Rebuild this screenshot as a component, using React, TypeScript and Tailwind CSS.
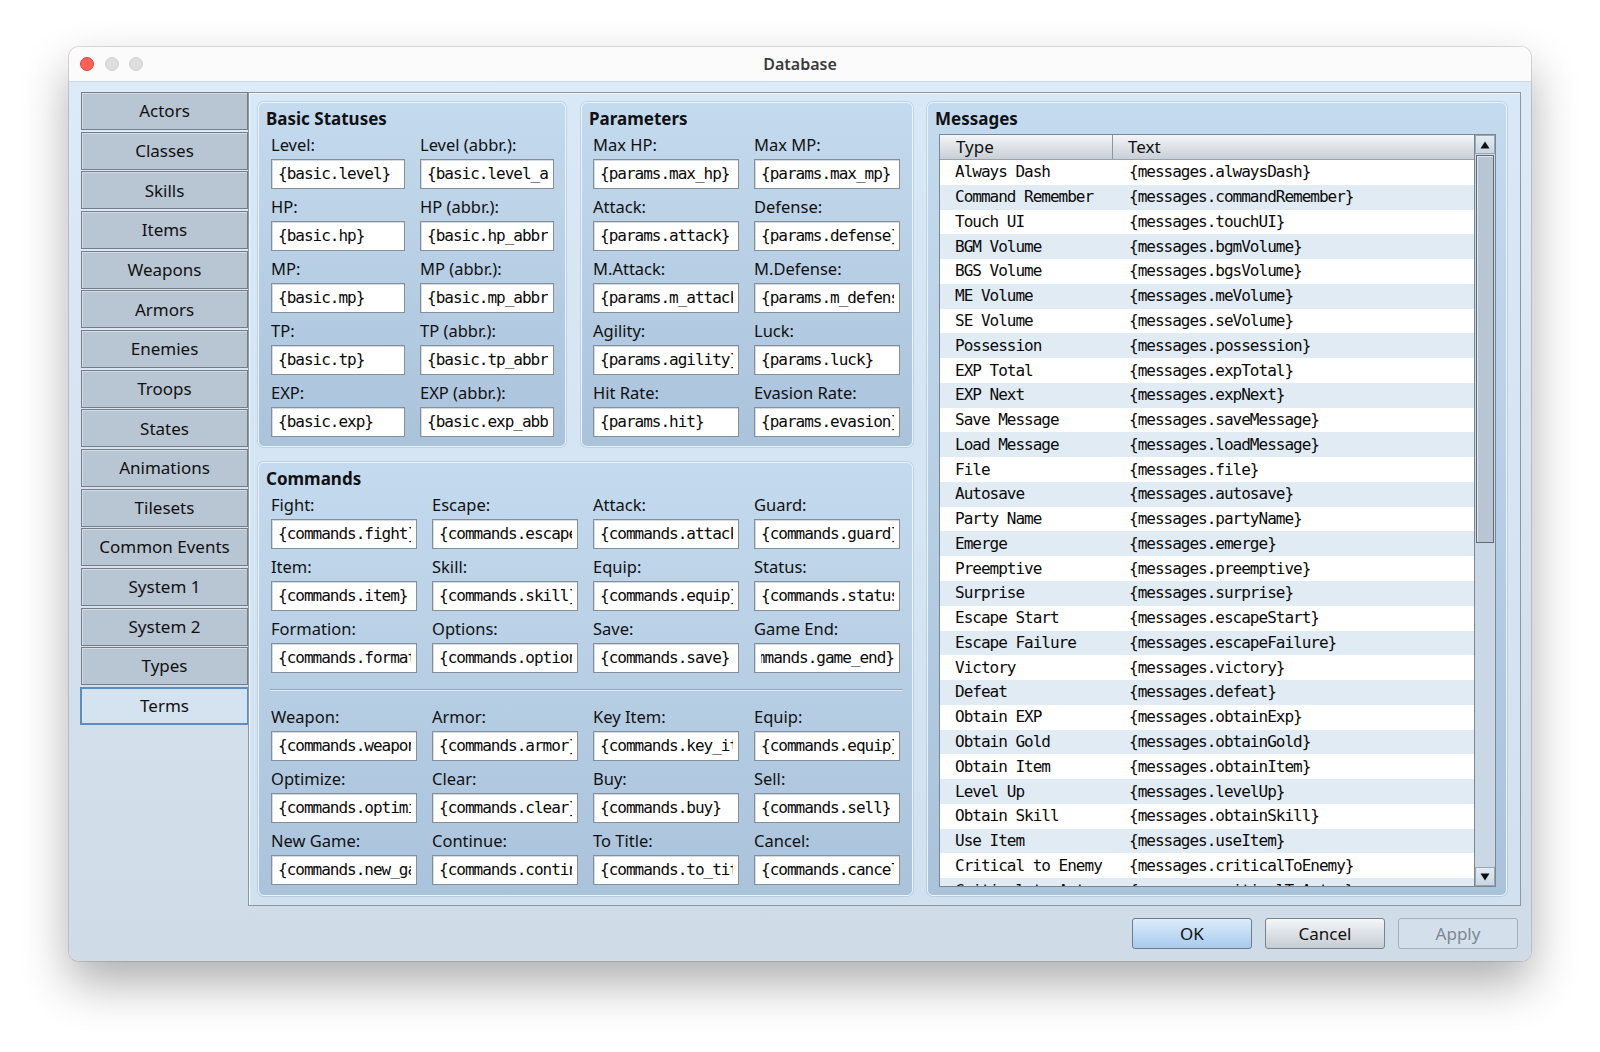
import React from "react";

type Field = { label: string; value: string; alignEnd?: boolean };

const sans = "font-['Noto_Sans',sans-serif]";
const mono = "font-['DejaVu_Sans_Mono',monospace] tracking-[-1px]";

const tabs = [
  "Actors",
  "Classes",
  "Skills",
  "Items",
  "Weapons",
  "Armors",
  "Enemies",
  "Troops",
  "States",
  "Animations",
  "Tilesets",
  "Common Events",
  "System 1",
  "System 2",
  "Types",
  "Terms",
];

const basicFields: Field[] = [
  { label: "Level:", value: "{basic.level}" },
  { label: "Level (abbr.):", value: "{basic.level_abbr}" },
  { label: "HP:", value: "{basic.hp}" },
  { label: "HP (abbr.):", value: "{basic.hp_abbr}" },
  { label: "MP:", value: "{basic.mp}" },
  { label: "MP (abbr.):", value: "{basic.mp_abbr}" },
  { label: "TP:", value: "{basic.tp}" },
  { label: "TP (abbr.):", value: "{basic.tp_abbr}" },
  { label: "EXP:", value: "{basic.exp}" },
  { label: "EXP (abbr.):", value: "{basic.exp_abbr}" },
];

const paramFields: Field[] = [
  { label: "Max HP:", value: "{params.max_hp}" },
  { label: "Max MP:", value: "{params.max_mp}" },
  { label: "Attack:", value: "{params.attack}" },
  { label: "Defense:", value: "{params.defense}" },
  { label: "M.Attack:", value: "{params.m_attack}" },
  { label: "M.Defense:", value: "{params.m_defense}" },
  { label: "Agility:", value: "{params.agility}" },
  { label: "Luck:", value: "{params.luck}" },
  { label: "Hit Rate:", value: "{params.hit}" },
  { label: "Evasion Rate:", value: "{params.evasion}" },
];

const menuCommands: Field[] = [
  { label: "Fight:", value: "{commands.fight}" },
  { label: "Escape:", value: "{commands.escape}" },
  { label: "Attack:", value: "{commands.attack}" },
  { label: "Guard:", value: "{commands.guard}" },
  { label: "Item:", value: "{commands.item}" },
  { label: "Skill:", value: "{commands.skill}" },
  { label: "Equip:", value: "{commands.equip}" },
  { label: "Status:", value: "{commands.status}" },
  { label: "Formation:", value: "{commands.formation}" },
  { label: "Options:", value: "{commands.options}" },
  { label: "Save:", value: "{commands.save}" },
  { label: "Game End:", value: "{commands.game_end}", alignEnd: true },
];

const shopCommands: Field[] = [
  { label: "Weapon:", value: "{commands.weapon}" },
  { label: "Armor:", value: "{commands.armor}" },
  { label: "Key Item:", value: "{commands.key_item}" },
  { label: "Equip:", value: "{commands.equip}" },
  { label: "Optimize:", value: "{commands.optimize}" },
  { label: "Clear:", value: "{commands.clear}" },
  { label: "Buy:", value: "{commands.buy}" },
  { label: "Sell:", value: "{commands.sell}" },
  { label: "New Game:", value: "{commands.new_game}" },
  { label: "Continue:", value: "{commands.continue}" },
  { label: "To Title:", value: "{commands.to_title}" },
  { label: "Cancel:", value: "{commands.cancel}" },
];

const messages: [string, string][] = [
  ["Always Dash", "alwaysDash"],
  ["Command Remember", "commandRemember"],
  ["Touch UI", "touchUI"],
  ["BGM Volume", "bgmVolume"],
  ["BGS Volume", "bgsVolume"],
  ["ME Volume", "meVolume"],
  ["SE Volume", "seVolume"],
  ["Possession", "possession"],
  ["EXP Total", "expTotal"],
  ["EXP Next", "expNext"],
  ["Save Message", "saveMessage"],
  ["Load Message", "loadMessage"],
  ["File", "file"],
  ["Autosave", "autosave"],
  ["Party Name", "partyName"],
  ["Emerge", "emerge"],
  ["Preemptive", "preemptive"],
  ["Surprise", "surprise"],
  ["Escape Start", "escapeStart"],
  ["Escape Failure", "escapeFailure"],
  ["Victory", "victory"],
  ["Defeat", "defeat"],
  ["Obtain EXP", "obtainExp"],
  ["Obtain Gold", "obtainGold"],
  ["Obtain Item", "obtainItem"],
  ["Level Up", "levelUp"],
  ["Obtain Skill", "obtainSkill"],
  ["Use Item", "useItem"],
  ["Critical to Enemy", "criticalToEnemy"],
  ["Critical to Actor", "criticalToActor"],
];

function TextField({ field }: { field: Field }) {
  return (
    <div className="flex flex-col">
      <div className={`flex h-[27px] items-center text-[16.5px] text-[#111] ${sans}`}>
        {field.label}
      </div>
      <div className="flex h-[30px] items-center border border-[#868f99] bg-white pl-[6px] pr-[5px] shadow-[inset_1px_1px_0_#d4dae0]">
        <div
          className={`flex w-full overflow-hidden whitespace-nowrap text-[16px] text-[#0a0a0a] ${mono} ${
            field.alignEnd ? "justify-end" : "justify-start"
          }`}
        >
          <span className="shrink-0">{field.value}</span>
        </div>
      </div>
    </div>
  );
}

function GroupBox({
  title,
  className,
  children,
}: {
  title: string;
  className: string;
  children: React.ReactNode;
}) {
  return (
    <div
      className={`flex flex-col rounded-[6px] border border-[#eaf2fa] bg-gradient-to-b from-[#c4daee] to-[#aac3db] shadow-[0_0_0_1px_rgba(120,150,180,0.25)] ${className}`}
    >
      <div
        className={`h-[29px] pl-[7px] pt-[5px] text-[17px] leading-[22px] font-bold text-[#111] ${sans}`}
      >
        {title}
      </div>
      {children}
    </div>
  );
}

function Sidebar() {
  return (
    <div className="flex w-[167px] flex-col gap-[1.67px]">
      {tabs.map((t) =>
        t === "Terms" ? (
          <div
            key={t}
            className={`-ml-[1px] flex h-[38px] w-[169px] items-center justify-center border-2 border-[#5a8dc0] bg-[#d5e3f1] text-[17px] text-[#111] ${sans}`}
          >
            {t}
          </div>
        ) : (
          <div
            key={t}
            className={`flex h-[38px] items-center justify-center border border-[#737e89] bg-[#b8c5d2] text-[17px] text-[#111] shadow-[inset_1px_1px_0_#d3dce5] ${sans}`}
          >
            {t}
          </div>
        )
      )}
    </div>
  );
}

function ScrollButton({ up }: { up: boolean }) {
  return (
    <div className="flex h-[19px] items-center justify-center border border-[#9aa6b2] bg-gradient-to-b from-[#e3ecf4] to-[#c9d6e3]">
      <svg width="10" height="8" viewBox="0 0 10 8">
        <path d={up ? "M5 0.5L9.5 7.5H0.5Z" : "M0.5 0.5H9.5L5 7.5Z"} fill="#111" />
      </svg>
    </div>
  );
}

function MessagesTable() {
  return (
    <div className="flex h-[753px] w-[557px] border border-[#7b8692] bg-white">
      <div className="flex flex-1 flex-col overflow-hidden">
        <div
          className={`flex h-[25px] shrink-0 border-b border-[#98a3ae] bg-gradient-to-b from-[#f4f6f8] to-[#c8cfd6] text-[17px] text-[#111] ${sans}`}
        >
          <div className="flex w-[173px] items-center border-r border-[#8d97a1] pl-[16px]">
            Type
          </div>
          <div className="flex flex-1 items-center pl-[15px]">Text</div>
        </div>
        <div className="flex flex-col">
          {messages.map(([name, key], i) => (
            <div
              key={key}
              className={`flex h-[24.77px] shrink-0 items-center whitespace-nowrap text-[16px] text-[#0a0a0a] ${mono} ${
                i % 2 === 0 ? "bg-white" : "bg-[#e1ebf4]"
              }`}
            >
              <div className="w-[174px] pl-[15px]">{name}</div>
              <div className="pl-[15px]">{`{messages.${key}}`}</div>
            </div>
          ))}
        </div>
      </div>
      <div className="flex w-[21px] flex-col border-l border-[#7b8692] bg-[#cad7e4]">
        <ScrollButton up />
        <div className="flex flex-1 flex-col pt-[1px]">
          <div className="mx-[1px] h-[388px] border border-[#5f6a76] bg-[#b9c5d2] shadow-[inset_1px_1px_0_#dde5ec]" />
        </div>
        <ScrollButton up={false} />
      </div>
    </div>
  );
}

function DialogButton({ label, kind }: { label: string; kind: "ok" | "normal" | "disabled" }) {
  const look =
    kind === "ok"
      ? "border-[#6e7d8c] bg-gradient-to-b from-[#dcecfa] to-[#a7cbee] text-[#111]"
      : kind === "normal"
      ? "border-[#7a838d] bg-gradient-to-b from-[#f5f7f9] to-[#c5ccd3] text-[#111]"
      : "border-[#a4afba] bg-[#d3e0ec] text-[#7e8791]";
  return (
    <div
      className={`flex h-[31px] w-[120px] items-center justify-center rounded-[3px] border text-[17px] ${sans} ${look}`}
    >
      {label}
    </div>
  );
}

export default function App() {
  return (
    <div className="min-h-screen bg-white pl-[69px] pt-[47px]">
      <div className="flex h-[914px] w-[1462px] flex-col overflow-hidden rounded-[10px] shadow-[0_22px_48px_rgba(0,0,0,0.32),0_0_0_1px_rgba(0,0,0,0.12)]">
        {/* title bar */}
        <div className="grid h-[35px] shrink-0 grid-cols-[1fr_auto_1fr] items-center border-b border-[#c6d9eb] bg-[#fbfbfb]">
          <div className="flex items-center gap-[10.5px] pl-[11px]">
            <div className="h-[14px] w-[14px] rounded-full border border-[#e1433c] bg-[#fe5f57]" />
            <div className="h-[14px] w-[14px] rounded-full border border-[#cfcfcf] bg-[#dedede]" />
            <div className="h-[14px] w-[14px] rounded-full border border-[#cfcfcf] bg-[#dedede]" />
          </div>
          <div className={`text-[16px] font-semibold text-[#3b3b3b] ${sans}`}>Database</div>
          <div />
        </div>

        {/* dialog body */}
        <div className="flex flex-1 flex-col bg-gradient-to-b from-[#ddeaf7] to-[#cfdbe7] pl-[12px] pr-[10px] pt-[10px]">
          <div className="flex">
            <Sidebar />
            <div className="flex h-[814px] w-[1273px] border border-[#8b97a3] bg-gradient-to-b from-[#d9e8f7] to-[#d2e1ef] pl-[9px] pt-[9px] shadow-[inset_1px_1px_0_#f2f7fc]">
              <div className="flex w-[655px] flex-col gap-[15px]">
                <div className="flex gap-[15px]">
                  <GroupBox title="Basic Statuses" className="h-[345px] w-[308px]">
                    <div className="grid grid-cols-[134px_134px] gap-x-[15px] gap-y-[5px] pl-[12px]">
                      {basicFields.map((f) => (
                        <TextField key={f.value} field={f} />
                      ))}
                    </div>
                  </GroupBox>
                  <GroupBox title="Parameters" className="h-[345px] w-[332px]">
                    <div className="grid grid-cols-[146px_146px] gap-x-[15px] gap-y-[5px] pl-[11px]">
                      {paramFields.map((f) => (
                        <TextField key={f.value} field={f} />
                      ))}
                    </div>
                  </GroupBox>
                </div>
                <GroupBox title="Commands" className="h-[434px] w-[655px]">
                  <div className="grid grid-cols-[146px_146px_146px_146px] gap-x-[15px] gap-y-[5px] pl-[12px]">
                    {menuCommands.map((f) => (
                      <TextField key={f.label + f.value} field={f} />
                    ))}
                  </div>
                  <div className="mb-[13px] ml-[11px] mr-[9px] mt-[16px] h-[2px] border-t border-[#93a9be] border-b border-b-[#dfe9f3]" />
                  <div className="grid grid-cols-[146px_146px_146px_146px] gap-x-[15px] gap-y-[5px] pl-[12px]">
                    {shopCommands.map((f) => (
                      <TextField key={f.label + f.value} field={f} />
                    ))}
                  </div>
                </GroupBox>
              </div>
              <div className="ml-[14px]">
                <GroupBox title="Messages" className="h-[794px] w-[580px]">
                  <div className="pl-[11px] pt-[2px]">
                    <MessagesTable />
                  </div>
                </GroupBox>
              </div>
            </div>
          </div>

          <div className="mt-[12px] flex justify-end gap-[13px] pr-[3px]">
            <DialogButton label="OK" kind="ok" />
            <DialogButton label="Cancel" kind="normal" />
            <DialogButton label="Apply" kind="disabled" />
          </div>
        </div>
      </div>
    </div>
  );
}
